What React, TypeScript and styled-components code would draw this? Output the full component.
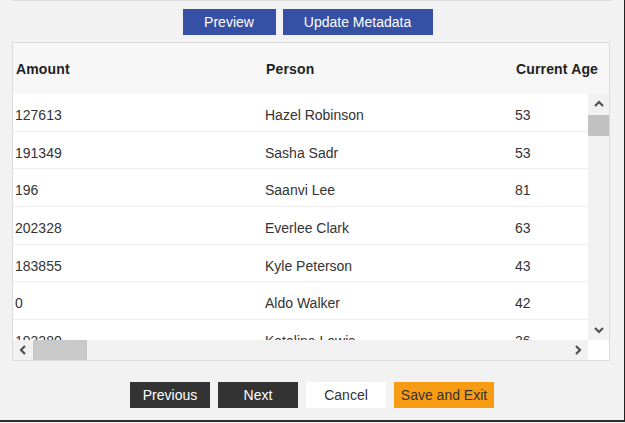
import styled, { createGlobalStyle } from "styled-components";

const GlobalStyle = createGlobalStyle`
  html, body {
    margin: 0;
    padding: 0;
    background: #f2f2f2;
  }
  * {
    box-sizing: border-box;
  }
`;

const rows = [
  { amount: "127613", person: "Hazel Robinson", age: "53" },
  { amount: "191349", person: "Sasha Sadr", age: "53" },
  { amount: "196", person: "Saanvi Lee", age: "81" },
  { amount: "202328", person: "Everlee Clark", age: "63" },
  { amount: "183855", person: "Kyle Peterson", age: "43" },
  { amount: "0", person: "Aldo Walker", age: "42" },
  { amount: "193280", person: "Katalina Lewis", age: "36" },
];

const columns = ["Amount", "Person", "Current Age"];

const Chevron = ({ dir }: { dir: "up" | "down" | "left" | "right" }) => {
  const pts = {
    up: "1,6 5,2 9,6",
    down: "1,2 5,6 9,2",
    left: "6,1 2,5 6,9",
    right: "2,1 6,5 2,9",
  }[dir];
  const vertical = dir === "up" || dir === "down";
  return (
    <svg
      width={vertical ? 10 : 8}
      height={vertical ? 8 : 10}
      viewBox={vertical ? "0 0 10 8" : "0 0 8 10"}
    >
      <polyline points={pts} fill="none" stroke="#505050" strokeWidth="2.2" />
    </svg>
  );
};

function App() {
  return (
    <>
      <GlobalStyle />
      <Frame>
        <TopRule />
        <Toolbar>
          <BlueButton w={93}>Preview</BlueButton>
          <BlueButton w={150}>Update Metadata</BlueButton>
        </Toolbar>
        <Panel>
          <HeaderRow>
            {columns.map((c) => (
              <HeadCell key={c}>{c}</HeadCell>
            ))}
          </HeaderRow>
          <Body>
            <Rows>
              {rows.map((r) => (
                <Row key={r.amount + r.person}>
                  <Cell>{r.amount}</Cell>
                  <Cell>{r.person}</Cell>
                  <Cell>{r.age}</Cell>
                </Row>
              ))}
            </Rows>
            <VScroll>
              <ArrowBox>
                <Chevron dir="up" />
              </ArrowBox>
              <VThumb />
              <Spacer />
              <ArrowBox>
                <Chevron dir="down" />
              </ArrowBox>
            </VScroll>
            <HScroll>
              <ArrowBox>
                <Chevron dir="left" />
              </ArrowBox>
              <HThumb />
              <Spacer />
              <ArrowBox>
                <Chevron dir="right" />
              </ArrowBox>
            </HScroll>
            <Corner />
          </Body>
        </Panel>
        <Footer>
          <ActionButton kind="dark" w={80}>
            Previous
          </ActionButton>
          <ActionButton kind="dark" w={80}>
            Next
          </ActionButton>
          <ActionButton kind="light" w={80}>
            Cancel
          </ActionButton>
          <ActionButton kind="orange" w={100}>
            Save and Exit
          </ActionButton>
        </Footer>
      </Frame>
    </>
  );
}

export default App;

const Frame = styled.div`
  width: 625px;
  height: 422px;
  background: #f2f2f2;
  border-right: 1px solid #222;
  border-bottom: 2px solid #2b2b2b;
  font-family: "Liberation Sans", Arial, sans-serif;
  font-size: 14px;
  color: #333;
  display: flex;
  flex-direction: column;
`;

const TopRule = styled.div`
  margin: 0 13px 0 12px;
  border-top: 1px solid #dcdcdc;
`;

const Toolbar = styled.div`
  display: flex;
  justify-content: center;
  gap: 7px;
  margin-top: 8px;
  padding-right: 9px;
`;

const BlueButton = styled.div<{ w: number }>`
  width: ${({ w }) => w}px;
  height: 26px;
  background: #3550a4;
  color: #fff;
  display: flex;
  align-items: center;
  justify-content: center;
  font-size: 14px;
`;

const Panel = styled.div`
  margin: 7px 14px 0 12px;
  height: 319px;
  border: 1px solid #dcdcdc;
  background: #fff;
  display: flex;
  flex-direction: column;
  overflow: hidden;
`;

const HeaderRow = styled.div`
  display: flex;
  height: 51px;
  background: #f7f7f7;
  align-items: center;
  overflow: hidden;
  flex-shrink: 0;
`;

const HeadCell = styled.div`
  flex: 0 0 250px;
  padding-left: 3px;
  font-weight: bold;
  letter-spacing: 0.15px;
  color: #222;
  white-space: nowrap;
`;

const Body = styled.div`
  flex: 1;
  display: grid;
  grid-template-columns: 1fr 21px;
  grid-template-rows: 1fr 20px;
  min-height: 0;
`;

const Rows = styled.div`
  overflow: hidden;
  min-width: 0;
`;

const Row = styled.div`
  display: flex;
  height: 37.7px;
  border-bottom: 1px solid #ededed;
  align-items: center;
`;

const Cell = styled.div`
  flex: 0 0 250px;
  padding-left: 2px;
  padding-top: 5px;
  white-space: nowrap;
  color: #333;
`;

const VScroll = styled.div`
  background: #f1f1f1;
  display: flex;
  flex-direction: column;
`;

const HScroll = styled.div`
  background: #f1f1f1;
  display: flex;
`;

const ArrowBox = styled.div`
  flex: 0 0 20px;
  width: 100%;
  height: 20px;
  display: flex;
  align-items: center;
  justify-content: center;
  ${HScroll} & {
    width: 20px;
    height: 100%;
  }
`;

const VThumb = styled.div`
  margin-top: 1px;
  height: 21px;
  background: #c1c1c1;
`;

const HThumb = styled.div`
  width: 54px;
  background: #c9c9c9;
`;

const Spacer = styled.div`
  flex: 1;
`;

const Corner = styled.div`
  background: #fff;
`;

const Footer = styled.div`
  display: flex;
  justify-content: center;
  gap: 8px;
  margin-top: 21px;
`;

const palette = {
  dark: { bg: "#333333", fg: "#ffffff" },
  light: { bg: "#ffffff", fg: "#333333" },
  orange: { bg: "#f89c14", fg: "#333333" },
};

const ActionButton = styled.div<{ kind: "dark" | "light" | "orange"; w: number }>`
  width: ${({ w }) => w}px;
  height: 26px;
  background: ${({ kind }) => palette[kind].bg};
  color: ${({ kind }) => palette[kind].fg};
  display: flex;
  align-items: center;
  justify-content: center;
  font-size: 14px;
`;
